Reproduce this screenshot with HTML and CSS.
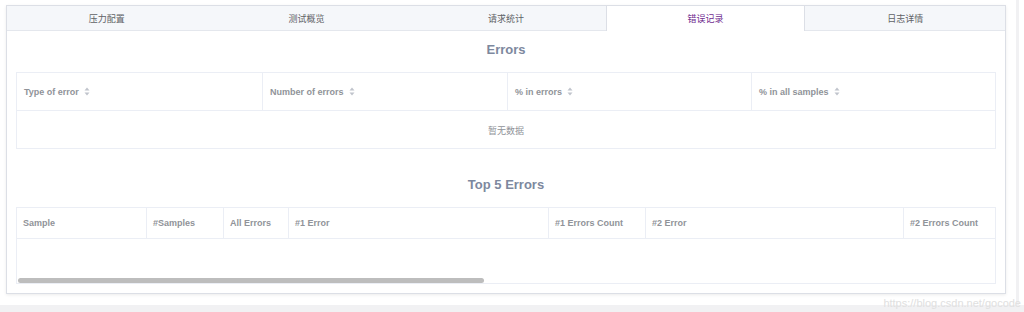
FILE: index.html
```html
<!DOCTYPE html>
<html lang="zh">
<head>
<meta charset="utf-8">
<title>错误记录</title>
<link rel="stylesheet" href="styles.css">
</head>
<body>
<div class="page">
  <div class="main">
    <div class="card">
      <div class="tabs">
        <div class="tab">压力配置</div>
        <div class="tab">测试概览</div>
        <div class="tab">请求统计</div>
        <div class="tab active">错误记录</div>
        <div class="tab">日志详情</div>
      </div>
      <div class="content">
        <h2 class="title">Errors</h2>
        <div class="table t1">
          <div class="row head">
            <div class="cell">Type of error <svg class="sort" viewBox="0 0 6 9"><path d="M3 0.5 L5.5 3.5 H0.5 Z"/><path d="M3 8.5 L5.5 5.5 H0.5 Z"/></svg></div>
            <div class="cell">Number of errors <svg class="sort" viewBox="0 0 6 9"><path d="M3 0.5 L5.5 3.5 H0.5 Z"/><path d="M3 8.5 L5.5 5.5 H0.5 Z"/></svg></div>
            <div class="cell">% in errors <svg class="sort" viewBox="0 0 6 9"><path d="M3 0.5 L5.5 3.5 H0.5 Z"/><path d="M3 8.5 L5.5 5.5 H0.5 Z"/></svg></div>
            <div class="cell last">% in all samples <svg class="sort" viewBox="0 0 6 9"><path d="M3 0.5 L5.5 3.5 H0.5 Z"/><path d="M3 8.5 L5.5 5.5 H0.5 Z"/></svg></div>
          </div>
          <div class="empty">暂无数据</div>
        </div>
        <h2 class="title title2">Top 5 Errors</h2>
        <div class="table t2">
          <div class="row head">
            <div class="cell">Sample</div>
            <div class="cell">#Samples</div>
            <div class="cell">All Errors</div>
            <div class="cell">#1 Error</div>
            <div class="cell">#1 Errors Count</div>
            <div class="cell">#2 Error</div>
            <div class="cell last">#2 Errors Count</div>
          </div>
          <div class="body2"></div>
          <div class="scrollbar"></div>
        </div>
      </div>
    </div>
  </div>
  <div class="side-strip"></div>
</div>
<div class="bottom-bar"></div>
<div class="watermark">https://blog.csdn.net/gocode</div>
</body>
</html>
```

FILE: styles.css
```css
html, body {
  margin: 0;
  padding: 0;
  background: #ffffff;
  font-family: "Liberation Sans", Arial, "Noto Sans CJK SC", sans-serif;
  width: 1024px;
  height: 312px;
  overflow: hidden;
  position: relative;
}

.page {
  display: flex;
  height: 305px;
}

.main {
  flex: 0 0 1008px;
  padding: 5px 0 0 6px;
  box-sizing: border-box;
}

.side-strip {
  flex: 0 0 3px;
  margin-left: 8px;
  background: #f1f1f3;
}

.card {
  width: 1000px;
  height: 289px;
  box-sizing: border-box;
  border: 1px solid #dcdfe6;
  background: #fff;
  box-shadow: 0 1px 3px rgba(0, 0, 0, 0.08);
  display: flex;
  flex-direction: column;
  overflow: hidden;
}

.tabs {
  display: flex;
  flex: 0 0 25px;
  height: 25px;
  background: #f5f7fa;
  border-bottom: 1px solid #e4e7ed;
  box-sizing: border-box;
}

.tab {
  flex: 1 1 0;
  box-sizing: border-box;
  display: flex;
  align-items: center;
  justify-content: center;
  font-family: "Noto Sans CJK SC", "Liberation Sans", sans-serif;
  font-size: 9px;
  color: #606266;
  border-left: 1px solid transparent;
  border-right: 1px solid transparent;
}

.tab.active {
  background: #fff;
  color: #6f2c8f;
  border-left-color: #dcdfe6;
  border-right-color: #dcdfe6;
  height: 25px;
}

.content {
  padding: 0 9px;
  display: flex;
  flex-direction: column;
}

.title {
  margin: 11px 0 14px;
  height: 16px;
  line-height: 16px;
  text-align: center;
  font-size: 13px;
  font-weight: bold;
  color: #7d889e;
}

.title2 {
  margin: 28px 0 14px;
}

.table {
  border: 1px solid #ebeef5;
  box-sizing: border-box;
  position: relative;
}

.row {
  display: grid;
  box-sizing: border-box;
  border-bottom: 1px solid #ebeef5;
}

.t1 .row {
  grid-template-columns: 246px 245px 244px 1fr;
  height: 38px;
}

.t2 .row {
  grid-template-columns: 130px 77px 65px 260px 97px 258px 1fr;
  height: 31px;
}

.cell {
  display: flex;
  align-items: center;
  padding-left: 7px;
  font-size: 9px;
  font-weight: bold;
  color: #909399;
  border-right: 1px solid #ebeef5;
  white-space: nowrap;
}

.t2 .cell {
  padding-left: 6px;
}

.cell.last {
  border-right: none;
}

.sort {
  width: 6px;
  height: 9px;
  margin-left: 5px;
  fill: #c0c4cc;
}

.empty {
  height: 37px;
  padding-top: 1px;
  box-sizing: border-box;
  display: flex;
  align-items: center;
  justify-content: center;
  font-family: "Noto Sans CJK SC", "Liberation Sans", sans-serif;
  font-size: 9px;
  color: #909399;
}

.body2 {
  height: 44px;
}

.scrollbar {
  position: absolute;
  left: 1px;
  bottom: 0;
  width: 466px;
  height: 5px;
  border-radius: 3px;
  background: #bdbdbd;
}

.bottom-bar {
  height: 7px;
  background: #f1f1f3;
}

.watermark {
  position: absolute;
  right: 3px;
  bottom: 3px;
  font-size: 11px;
  color: #e0e0e0;
}
```
